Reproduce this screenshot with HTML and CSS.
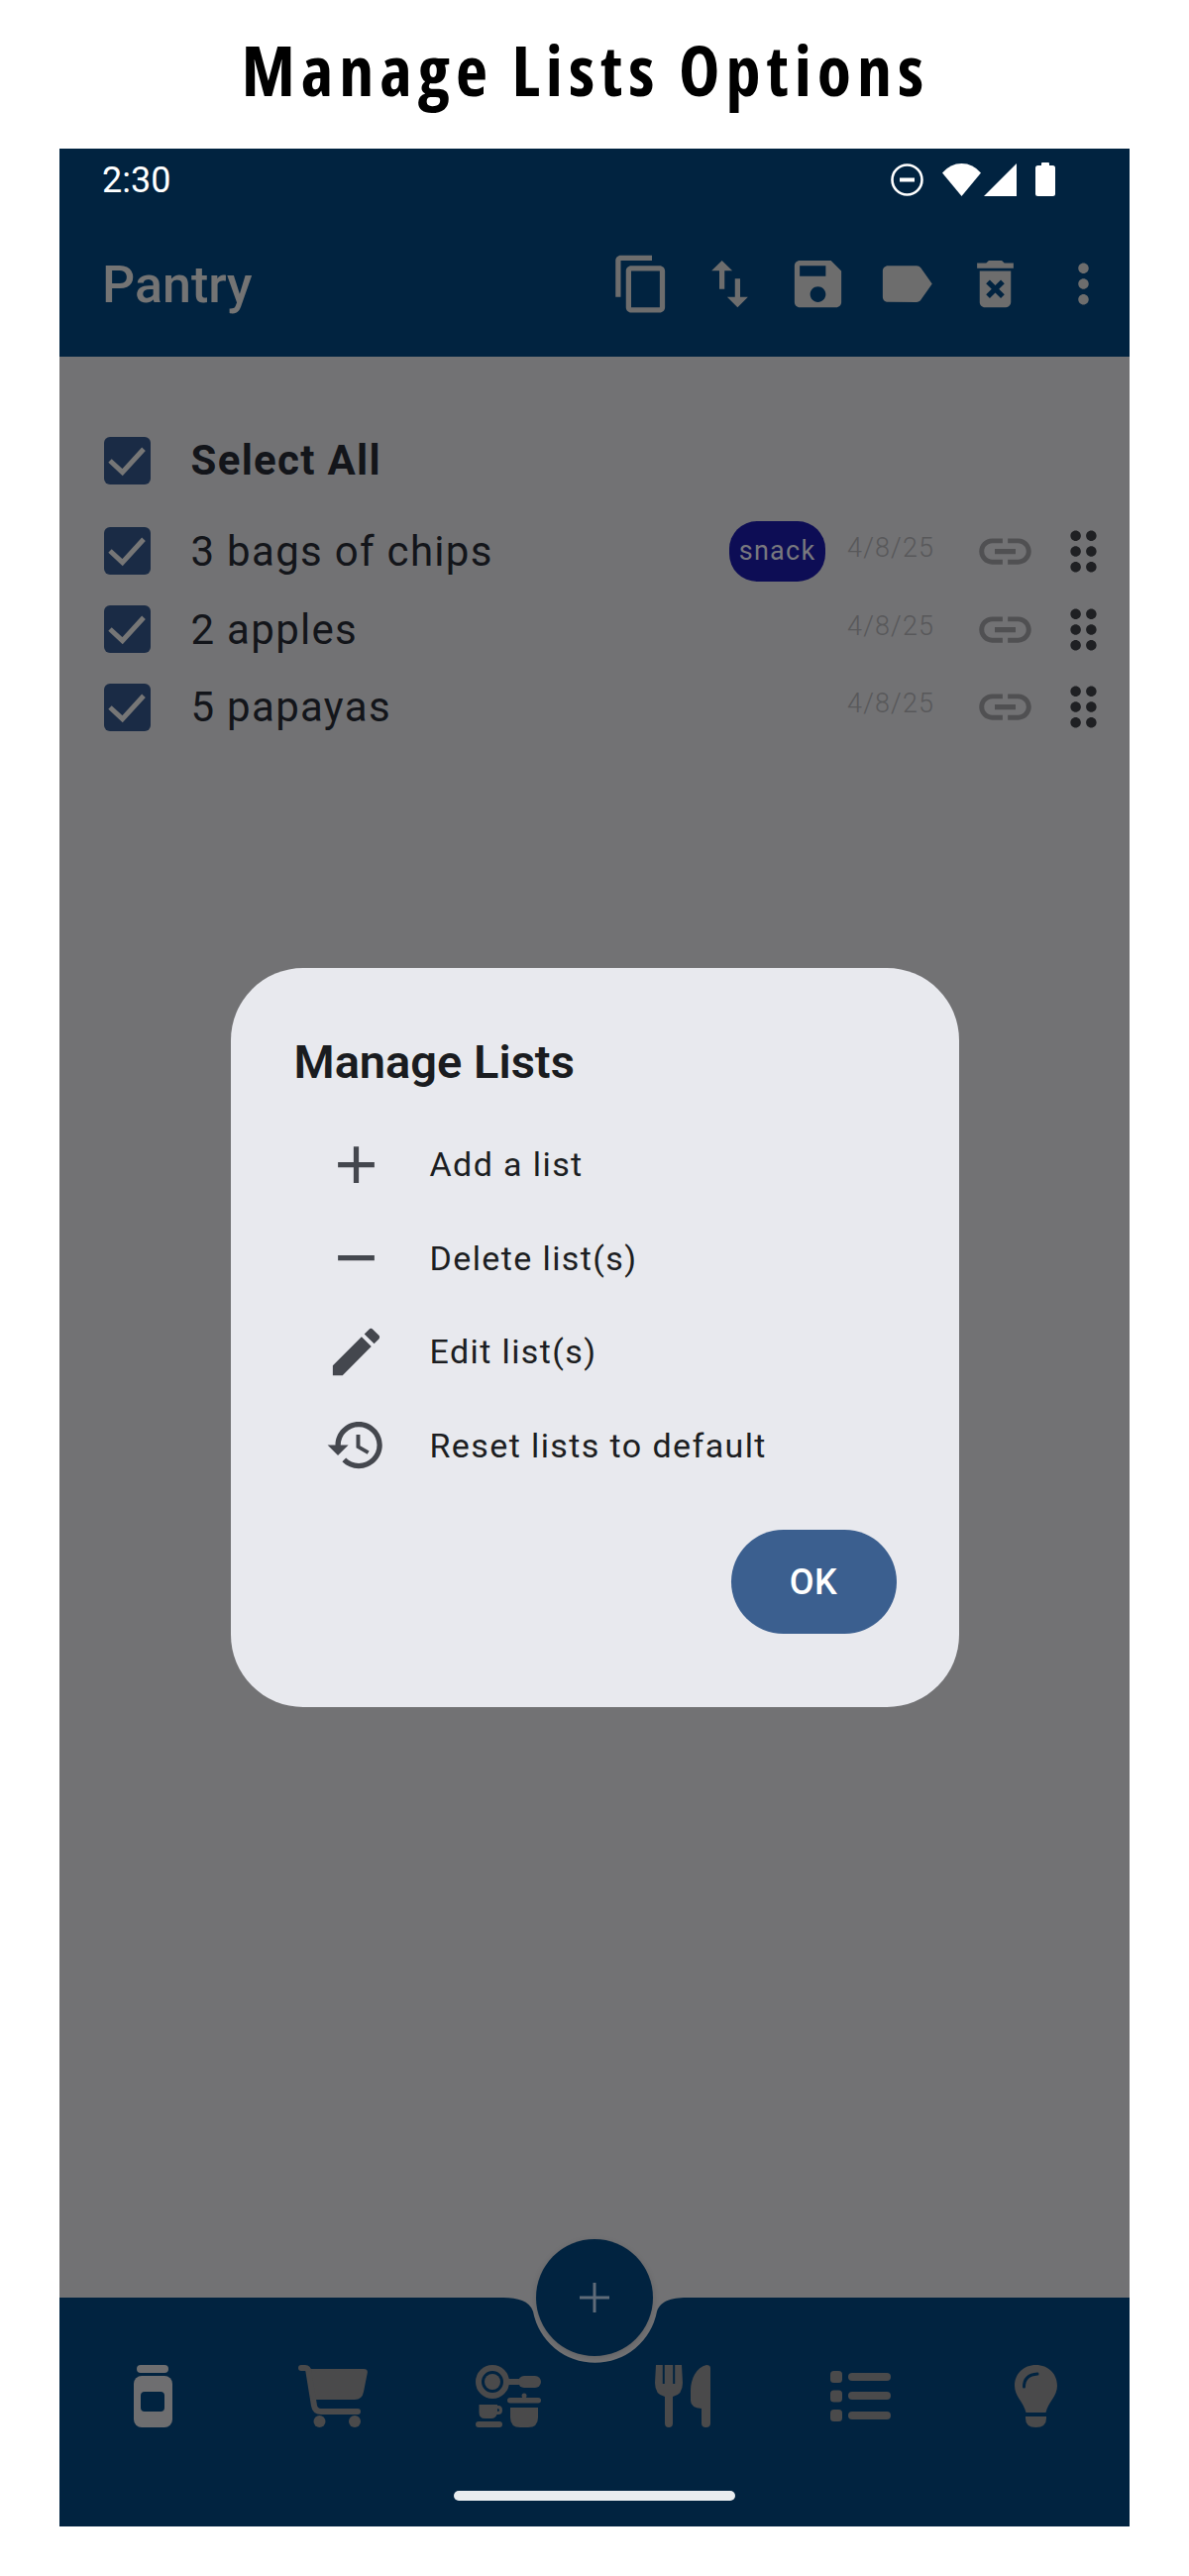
FILE: index.html
```html
<!DOCTYPE html>
<html lang="en">
<head>
    <meta charset="UTF-8">
    <meta name="viewport" content="width=device-width, initial-scale=1.0">
    <title>Manage Lists Options</title>
    <link rel="stylesheet" href="styles.css">
</head>
<body>
    <svg class="defs" width="0" height="0">
        <symbol id="check" viewBox="0 0 47 48"><path d="M6 24L18.6 35.7L40 12.3" fill="none" stroke="#767676" stroke-width="5"/></symbol>
        <symbol id="link" viewBox="0 0 24 24"><path d="M3.9 12c0-1.71 1.39-3.1 3.1-3.1h4V7H7c-2.76 0-5 2.24-5 5s2.24 5 5 5h4v-1.9H7c-1.71 0-3.1-1.39-3.1-3.1zM8 13h8v-2H8v2zm9-6h-4v1.9h4c1.71 0 3.1 1.39 3.1 3.1s-1.39 3.1-3.1 3.1h-4V17h4c2.76 0 5-2.24 5-5s-2.24-5-5-5z"/></symbol>
        <symbol id="drag" viewBox="0 0 24 24"><path d="M11 18c0 1.1-.9 2-2 2s-2-.9-2-2 .9-2 2-2 2 .9 2 2zm-2-8c-1.1 0-2 .9-2 2s.9 2 2 2 2-.9 2-2-.9-2-2-2zm0-6c-1.1 0-2 .9-2 2s.9 2 2 2 2-.9 2-2-.9-2-2-2zm6 4c1.1 0 2-.9 2-2s-.9-2-2-2-2 .9-2 2 .9 2 2 2zm0 2c-1.1 0-2 .9-2 2s.9 2 2 2 2-.9 2-2-.9-2-2-2zm0 6c-1.1 0-2 .9-2 2s.9 2 2 2 2-.9 2-2-.9-2-2-2z"/></symbol>
    </svg>

    <h1 class="page-title">Manage Lists Options</h1>

    <div class="phone">
        <div class="status-bar">
            <span class="time">2:30</span>
            <div class="status-icons">
                <svg class="st-dnd" viewBox="0 0 33 33"><circle cx="16.5" cy="16.5" r="15" fill="none" stroke="#fff" stroke-width="2.6"/><rect x="9" y="14.5" width="15" height="4"/></svg>
                <svg class="st-wifi" viewBox="0 0 39 33"><path d="M19.5 33L0 9.5Q8 0 19.5 0T39 9.5Z"/></svg>
                <svg class="st-signal" viewBox="0 0 33 33"><path d="M33 0V33H0Z"/></svg>
                <svg class="st-battery" viewBox="0 0 20 34"><rect x="6" y="0" width="8" height="5" rx="1"/><rect x="0" y="3" width="20" height="31" rx="2.5"/></svg>
            </div>
        </div>

        <header class="app-bar">
            <span class="app-title">Pantry</span>
            <div class="app-actions">
                <svg class="icon" viewBox="0 0 24 24"><path d="M16 1H4c-1.1 0-2 .9-2 2v14h2V3h12V1zm3 4H8c-1.1 0-2 .9-2 2v14c0 1.1.9 2 2 2h11c1.1 0 2-.9 2-2V7c0-1.1-.9-2-2-2zm0 16H8V7h11v14z"/></svg>
                <svg class="icon" viewBox="0 0 24 24"><path d="M16 17.01V10h-2v7.01h-3L15 21l4-3.99h-3zM9 3L5 6.99h3V14h2V6.99h3L9 3z"/></svg>
                <svg class="icon" viewBox="0 0 24 24"><path d="M17 3H5c-1.11 0-2 .9-2 2v14c0 1.1.89 2 2 2h14c1.1 0 2-.9 2-2V7l-4-4zm-5 16c-1.66 0-3-1.34-3-3s1.34-3 3-3 3 1.34 3 3-1.34 3-3 3zm3-10H5V5h10v4z"/></svg>
                <svg class="icon" viewBox="0 0 24 24"><path d="M17.63 5.84C17.27 5.33 16.67 5 16 5L5 5.01C3.9 5.01 3 5.9 3 7v10c0 1.1.9 1.99 2 1.99L16 19c.67 0 1.27-.33 1.63-.84L22 12l-4.37-6.16z"/></svg>
                <svg class="icon" viewBox="0 0 24 24"><path d="M6 19c0 1.1.9 2 2 2h8c1.1 0 2-.9 2-2V7H6v12zm2.46-7.12l1.41-1.41L12 12.59l2.12-2.12 1.41 1.41L13.41 14l2.12 2.12-1.41 1.41L12 15.41l-2.12 2.12-1.41-1.41L10.59 14l-2.13-2.12zM15.5 4l-1-1h-5l-1 1H5v2h14V4z"/></svg>
                <svg class="icon" viewBox="0 0 24 24"><path d="M12 8c1.1 0 2-.9 2-2s-.9-2-2-2-2 .9-2 2 .9 2 2 2zm0 2c-1.1 0-2 .9-2 2s.9 2 2 2 2-.9 2-2-.9-2-2-2zm0 6c-1.1 0-2 .9-2 2s.9 2 2 2 2-.9 2-2-.9-2-2-2z"/></svg>
            </div>
        </header>

        <main class="content">
            <div class="row select-all">
                <span class="checkbox"><svg viewBox="0 0 47 48"><use href="#check"/></svg></span>
                <span class="row-text">Select All</span>
            </div>
            <div class="row">
                <span class="checkbox"><svg viewBox="0 0 47 48"><use href="#check"/></svg></span>
                <span class="row-text">3 bags of chips</span>
                <span class="chip">snack</span>
                <span class="date">4/8/25</span>
                <svg class="icon link-icon" viewBox="0 0 24 24"><use href="#link"/></svg>
                <svg class="icon drag-icon" viewBox="0 0 24 24"><use href="#drag"/></svg>
            </div>
            <div class="row">
                <span class="checkbox"><svg viewBox="0 0 47 48"><use href="#check"/></svg></span>
                <span class="row-text">2 apples</span>
                <span class="date">4/8/25</span>
                <svg class="icon link-icon" viewBox="0 0 24 24"><use href="#link"/></svg>
                <svg class="icon drag-icon" viewBox="0 0 24 24"><use href="#drag"/></svg>
            </div>
            <div class="row">
                <span class="checkbox"><svg viewBox="0 0 47 48"><use href="#check"/></svg></span>
                <span class="row-text">5 papayas</span>
                <span class="date">4/8/25</span>
                <svg class="icon link-icon" viewBox="0 0 24 24"><use href="#link"/></svg>
                <svg class="icon drag-icon" viewBox="0 0 24 24"><use href="#drag"/></svg>
            </div>
        </main>

        <nav class="bottom-nav">
            <svg class="notch" viewBox="0 0 200 70"><path d="M4 0C20 0 34 2 38 14A63.6 63.6 0 0 0 163 14C167 2 180 0 196 0Z"/></svg>
            <div class="fab"><svg viewBox="0 0 30 30"><path d="M15 0V30M0 15H30"/></svg></div>

            <div class="nav-items">
                <div class="nav-item">
                    <svg class="nav-active" width="39" height="63" viewBox="0 0 39 63">
                        <rect x="3" y="0" width="32" height="8" rx="4"/>
                        <rect x="0" y="11" width="39" height="52" rx="8"/>
                        <rect class="cut" x="7" y="27" width="24" height="20" rx="4"/>
                    </svg>
                </div>
                <div class="nav-item">
                    <svg class="nudge-3" width="70" height="63" viewBox="0 0 70 63">
                        <path d="M12 4H66Q70.500 4 69.800 8L66 27Q64.500 35 57 35H17Z"/>
                        <path class="line" d="M3 3H7Q10 3 10.500 7L16 41Q17 47 23 47H60"/>
                        <circle cx="21.500" cy="57" r="6"/>
                        <circle cx="57" cy="57" r="6"/>
                    </svg>
                </div>
                <div class="nav-item">
                    <svg class="nudge-2" width="66" height="63" viewBox="0 0 66 63">
                        <circle class="ring" cx="17" cy="17" r="14"/>
                        <circle cx="17" cy="17" r="8"/>
                        <rect x="30" y="14" width="18" height="6"/>
                        <rect x="43" y="11" width="23" height="12" rx="6"/>
                        <circle cx="49" cy="31" r="2.500"/>
                        <rect x="32" y="33" width="34" height="5.500" rx="2.750"/>
                        <path d="M35 43H63V53Q63 63 53 63H45Q35 63 35 53Z"/>
                        <path fill-rule="evenodd" d="M3.500 40H22V41H23Q27 41 27 45.500T23 50H21.500Q20 54 16 54H9.500Q3.500 54 3.500 48ZM22 44V47Q24 47 24 45.500T22 44Z"/>
                        <rect x="0" y="57" width="27" height="6" rx="3"/>
                    </svg>
                </div>
                <div class="nav-item">
                    <svg width="56" height="63" viewBox="0 0 56 63">
                        <path d="M1 0H27L28 18Q28 30 18 32V59Q18 63 14 63Q10 63 10 59V32Q0 30 0 18Z"/>
                        <path class="slot" d="M8.800 0V19M19.200 0V19"/>
                        <path d="M56 3Q56 0 52 0C42 2 36 14 36 26V36Q36 43 47 44V59Q47 63 51.500 63Q56 63 56 59Z"/>
                    </svg>
                </div>
                <div class="nav-item">
                    <svg class="nudge-1" width="61" height="51" viewBox="0 0 61 51">
                        <rect x="0" y="0" width="12" height="12" rx="3.500"/>
                        <rect x="0" y="19.500" width="12" height="12" rx="3.500"/>
                        <rect x="0" y="39" width="12" height="12" rx="3.500"/>
                        <rect x="18" y="2" width="43" height="8" rx="4"/>
                        <rect x="18" y="21" width="43" height="8" rx="4"/>
                        <rect x="18" y="41" width="43" height="8" rx="4"/>
                    </svg>
                </div>
                <div class="nav-item">
                    <svg width="43" height="63" viewBox="0 0 43 63">
                        <path d="M21.500 0C9 0 0 9 0 21C0 32 9 37 11.500 48H31.500C34 37 43 32 43 21C43 9 34 0 21.500 0Z"/>
                        <path d="M11 52H32V54Q32 63 21.500 63Q11 63 11 54Z"/>
                        <path class="shine" d="M9.500 22Q9.500 10 23 9"/>
                    </svg>
                </div>
            </div>
            <div class="home-bar"></div>
        </nav>

        <div class="scrim">
            <div class="modal">
                <h2 class="modal-title">Manage Lists</h2>
                <div class="option">
                    <svg class="icon" viewBox="0 0 24 24"><path d="M19 13h-6v6h-2v-6H5v-2h6V5h2v6h6v2z"/></svg>
                    <span>Add a list</span>
                </div>
                <div class="option">
                    <svg class="icon" viewBox="0 0 24 24"><path d="M19 13H5v-2h14v2z"/></svg>
                    <span>Delete list(s)</span>
                </div>
                <div class="option">
                    <svg class="icon" viewBox="0 0 24 24"><path d="M3 17.25V21h3.750L17.810 9.940l-3.750-3.750L3 17.250zM20.710 7.040c.39-.39.39-1.020 0-1.410l-2.340-2.340c-.39-.39-1.020-.39-1.410 0l-1.830 1.830 3.750 3.750 1.830-1.830z"/></svg>
                    <span>Edit list(s)</span>
                </div>
                <div class="option">
                    <svg class="icon" viewBox="0 0 24 24"><path d="M13 3c-4.970 0-9 4.030-9 9H1l3.890 3.890.07.14L9 12H6c0-3.870 3.130-7 7-7s7 3.130 7 7-3.130 7-7 7c-1.930 0-3.680-.79-4.940-2.060l-1.420 1.420C8.270 19.990 10.510 21 13 21c4.970 0 9-4.030 9-9s-4.030-9-9-9zm-1 5v5l4.280 2.540.72-1.210-3.500-2.080V8H12z"/></svg>
                    <span>Reset lists to default</span>
                </div>
                <div class="modal-actions">
                    <button class="ok-btn" type="button">OK</button>
                </div>
            </div>
        </div>
    </div>
</body>
</html>
```

FILE: styles.css
```css
body {
    margin: 0;
    background-color: #fff;
    font-family: Roboto, "Liberation Sans", sans-serif;
}
.defs {
    position: absolute;
}
.page-title {
    height: 150px;
    margin: 0;
    display: flex;
    justify-content: center;
    align-items: center;
    padding: 0 18px 10px 0;
    box-sizing: border-box;
    font-family: "Open Sans", sans-serif;
    font-size: 70px;
    font-stretch: 75%;
    font-weight: 700;
    letter-spacing: 6px;
    color: #000;
}
.phone {
    position: relative;
    width: 1080px;
    height: 2400px;
    margin: 0 60px;
    display: flex;
    flex-direction: column;
    background-color: #727274;
}

/* status bar */
.status-bar {
    height: 62px;
    flex: none;
    display: flex;
    justify-content: space-between;
    align-items: center;
    padding: 0 75px 0 43px;
    background-color: #012340;
    color: #fff;
}
.time {
    padding-top: 1px;
    font-size: 36px;
}
.status-icons {
    display: flex;
    align-items: center;
}
.status-icons svg {
    fill: #fff;
    display: block;
}
.st-dnd {
    width: 33px;
    height: 33px;
    margin-right: 19px;
}
.status-icons .st-dnd rect {
    fill: #fff;
}
.st-wifi {
    width: 39px;
    height: 33px;
    margin-right: 3px;
}
.st-signal {
    width: 33px;
    height: 33px;
    margin-right: 19px;
}
.st-battery {
    width: 20px;
    height: 34px;
}

/* app bar */
.app-bar {
    height: 148px;
    flex: none;
    display: flex;
    align-items: center;
    padding: 0 15px 0 43px;
    background-color: #012340;
}
.app-title {
    flex: 1;
    padding-top: 3px;
    font-size: 52px;
    font-weight: 500;
    color: #747474;
}
.app-actions {
    display: flex;
    gap: 26.3px;
}
.icon {
    width: 63px;
    height: 63px;
    flex: none;
    display: block;
}
.app-actions .icon {
    fill: #6d6d6d;
}

/* list */
.content {
    flex: 1;
    padding: 65.25px 0 0 45px;
}
.row {
    height: 78.75px;
    display: flex;
    align-items: center;
    padding-right: 15.4px;
}
.select-all {
    margin-bottom: 13px;
}
.checkbox {
    width: 47px;
    height: 48px;
    flex: none;
    border-radius: 6px;
    background-color: #1a2b45;
}
.checkbox svg {
    display: block;
}
.row-text {
    flex: 1;
    margin-left: 40.5px;
    font-size: 42px;
    letter-spacing: 1.3px;
    color: #13151a;
}
.select-all .row-text {
    font-weight: 700;
}
.chip {
    height: 61px;
    width: 97px;
    display: flex;
    justify-content: center;
    align-items: center;
    box-sizing: border-box;
    border-radius: 28px;
    background-color: #0d0d55;
    color: #78787e;
    font-size: 27px;
    letter-spacing: 1.3px;
}
.date {
    margin-left: 22px;
    width: 128px;
    padding-bottom: 7px;
    font-size: 27px;
    font-weight: 300;
    letter-spacing: 1.1px;
    color: #58585a;
}
.link-icon {
    fill: #505052;
}
.drag-icon {
    margin-left: 15.500px;
    fill: #1f2023;
}

/* bottom nav */
.bottom-nav {
    position: relative;
    height: 231px;
    flex: none;
    box-sizing: border-box;
    padding-top: 68px;
    background-color: #012340;
}
.notch {
    position: absolute;
    top: 0;
    left: 440px;
    width: 200px;
    height: 70px;
    fill: #727274;
}
.fab {
    position: absolute;
    top: -59px;
    left: 481px;
    width: 118px;
    height: 118px;
    display: flex;
    justify-content: center;
    align-items: center;
    border-radius: 50%;
    background-color: #012340;
    box-shadow: 0 2px 6px rgba(0, 0, 0, 0.15);
}
.fab svg {
    width: 30px;
    height: 30px;
    fill: none;
    stroke: #5f6b78;
    stroke-width: 3;
}
.nav-items {
    position: relative;
    display: flex;
    padding: 0 5.500px;
    height: 63px;
}
.nav-item {
    flex: 1;
    display: flex;
    justify-content: center;
    align-items: center;
}
.nav-item svg {
    fill: #4a4a4b;
    display: block;
}
.nav-item .nudge-1 {
    margin-left: 2px;
}
.nav-item .nudge-2 {
    margin-left: 4px;
}
.nav-item .nudge-3 {
    margin-left: 6px;
}
.nav-item .nav-active {
    fill: #6e6e70;
}
.nav-item .cut {
    fill: #012340;
}
.nav-item .line {
    fill: none;
    stroke: #4a4a4b;
    stroke-width: 6;
    stroke-linecap: round;
}
.nav-item .ring {
    fill: none;
    stroke: #4a4a4b;
    stroke-width: 6;
}
.nav-item .slot {
    fill: none;
    stroke: #012340;
    stroke-width: 2;
}
.nav-item .shine {
    fill: none;
    stroke: #012340;
    stroke-width: 3;
    stroke-linecap: round;
}
.home-bar {
    width: 284px;
    height: 10px;
    margin: 64px auto 0;
    border-radius: 5px;
    background-color: #e9edf0;
}

/* dialog */
.scrim {
    position: absolute;
    top: 0;
    left: 0;
    right: 0;
    bottom: 0;
    display: flex;
    justify-content: center;
    align-items: center;
}
.modal {
    width: 735px;
    height: 746px;
    box-sizing: border-box;
    padding: 66px 63px 0 64px;
    border-radius: 73px;
    background-color: #e8e9ee;
}
.modal-title {
    margin: 0 0 27px;
    font-size: 47px;
    line-height: 58px;
    font-weight: 600;
    color: #1a1c20;
}
.option {
    height: 94.500px;
    display: flex;
    align-items: center;
    gap: 43px;
    padding-left: 31px;
    font-size: 34px;
    letter-spacing: 1.4px;
    color: #1c1e22;
}
.option .icon {
    fill: #44474e;
}
.modal-actions {
    display: flex;
    justify-content: flex-end;
    margin-top: 38px;
}
.ok-btn {
    width: 167px;
    height: 105px;
    border: 0;
    border-radius: 53px;
    background-color: #3b5f8f;
    color: #fff;
    font-family: Roboto, sans-serif;
    font-size: 36px;
    font-weight: 500;
    letter-spacing: 0.5px;
}
```
